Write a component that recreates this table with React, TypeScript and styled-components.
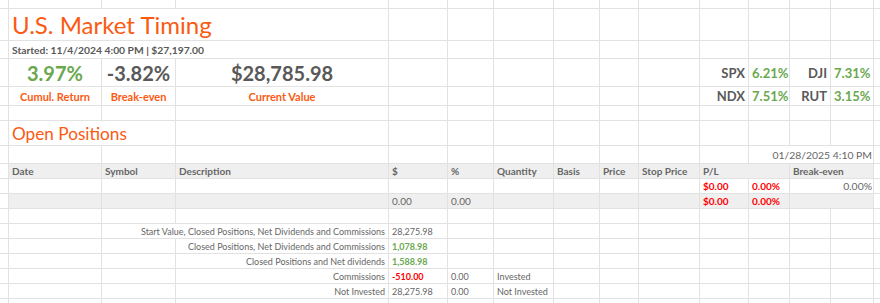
import React from "react";
import styled, { createGlobalStyle } from "styled-components";

const GlobalStyle = createGlobalStyle`
  html, body {
    margin: 0;
    padding: 0;
    background: #ffffff;
    overflow: hidden;
  }
  body {
    font-family: Lato, "Open Sans", sans-serif;
  }
`;

// column / row sizes of the sheet, borders sit on the last pixel of each track
const COLS = [9, 93, 74, 213, 59, 46, 60, 46, 39, 61, 49, 41, 41, 43, 30];
const ROWS = [9, 32, 18, 28, 19, 15, 25, 18, 15, 15, 15, 15, 15, 15, 15, 15, 15, 15];

const GRID = "#e2e2e2";
const ORANGE = "#fb5a12";
const GREEN = "#6aa84f";
const RED = "#ff0000";
const INK = "#595959";
const MUTED = "#666666";

const Sheet = styled.div`
  display: grid;
  grid-template-columns: ${COLS.map((c) => `${c}px`).join(" ")};
  grid-template-rows: ${ROWS.map((r) => `${r}px`).join(" ")};
  width: 880px;
  height: 303px;
  overflow: hidden;
`;

type Align = "left" | "center" | "right";

const Cell = styled.div<{
  $r: number;
  $c: number;
  $span: number;
  $shade?: boolean;
  $align?: Align;
}>`
  grid-row: ${({ $r }) => $r + 1};
  grid-column: ${({ $c, $span }) => `${$c + 1} / span ${$span}`};
  box-sizing: border-box;
  border-right: 1px solid ${GRID};
  border-bottom: 1px solid ${GRID};
  background: ${({ $shade }) => ($shade ? "#efefef" : "transparent")};
  display: flex;
  align-items: center;
  justify-content: ${({ $align }) =>
    $align === "center" ? "center" : $align === "right" ? "flex-end" : "flex-start"};
  padding: 0 3px;
  white-space: nowrap;
  font-size: 10px;
  color: ${MUTED};
`;

const Title = styled(Cell)`
  font-size: 24px;
  color: ${ORANGE};
`;

const Started = styled(Cell)`
  font-size: 10.3px;
  font-weight: 700;
  color: ${INK};
`;

const BigGain = styled(Cell).attrs({ $align: "center" as Align })`
  font-size: 20px;
  font-weight: 700;
  color: ${GREEN};
`;

const BigFigure = styled(Cell).attrs({ $align: "center" as Align })`
  font-size: 20px;
  font-weight: 700;
  color: ${INK};
`;

const FigureLabel = styled(Cell).attrs({ $align: "center" as Align })`
  font-size: 11px;
  font-weight: 700;
  color: ${ORANGE};
`;

const IndexName = styled(Cell).attrs({ $align: "right" as Align })`
  font-size: 13px;
  font-weight: 700;
  color: ${INK};
`;

const IndexValue = styled(Cell)`
  font-size: 13px;
  font-weight: 700;
  color: ${GREEN};
`;

const Section = styled(Cell)`
  font-size: 17.2px;
  color: ${ORANGE};
`;

const Stamp = styled(Cell).attrs({ $align: "right" as Align })`
  font-size: 10.4px;
  padding-right: 1px;
  color: ${MUTED};
`;

const Head = styled(Cell)`
  font-weight: 700;
  color: ${MUTED};
`;

const Data = styled(Cell)``;

const EdgeValue = styled(Cell).attrs({ $align: "right" as Align })`
  font-size: 10.4px;
  padding-right: 1px;
`;

const Loss = styled(Cell)`
  font-weight: 700;
  color: ${RED};
`;

// the summary block under the table uses a smaller type
const SumLabel = styled(Cell).attrs({ $align: "right" as Align })`
  font-size: 9px;
`;

const SumValue = styled(Cell)`
  font-size: 9px;
`;

const SumGain = styled(SumValue)`
  font-weight: 700;
  color: ${GREEN};
`;

const SumLoss = styled(SumValue)`
  font-weight: 700;
  color: ${RED};
`;

const Blank = styled(Cell)``;

type Entry = [number, number, number, React.ElementType, string];

const entries: Entry[] = [
  [1, 1, 3, Title, "U.S. Market Timing"],
  [2, 1, 3, Started, "Started: 11/4/2024 4:00 PM | $27,197.00"],

  [3, 1, 1, BigGain, "3.97%"],
  [3, 2, 1, BigFigure, "-3.82%"],
  [3, 3, 1, BigFigure, "$28,785.98"],
  [4, 1, 1, FigureLabel, "Cumul. Return"],
  [4, 2, 1, FigureLabel, "Break-even"],
  [4, 3, 1, FigureLabel, "Current Value"],

  [3, 10, 1, IndexName, "SPX"],
  [3, 11, 1, IndexValue, "6.21%"],
  [3, 12, 1, IndexName, "DJI"],
  [3, 13, 1, IndexValue, "7.31%"],
  [4, 10, 1, IndexName, "NDX"],
  [4, 11, 1, IndexValue, "7.51%"],
  [4, 12, 1, IndexName, "RUT"],
  [4, 13, 1, IndexValue, "3.15%"],

  [6, 1, 2, Section, "Open Positions"],
  [7, 11, 3, Stamp, "01/28/2025 4:10 PM"],

  [8, 1, 1, Head, "Date"],
  [8, 2, 1, Head, "Symbol"],
  [8, 3, 1, Head, "Description"],
  [8, 4, 1, Head, "$"],
  [8, 5, 1, Head, "%"],
  [8, 6, 1, Head, "Quantity"],
  [8, 7, 1, Head, "Basis"],
  [8, 8, 1, Head, "Price"],
  [8, 9, 1, Head, "Stop Price"],
  [8, 10, 2, Head, "P/L"],
  [8, 12, 2, Head, "Break-even"],

  [9, 10, 1, Loss, "$0.00"],
  [9, 11, 1, Loss, "0.00%"],
  [9, 12, 2, EdgeValue, "0.00%"],

  [10, 4, 1, Data, "0.00"],
  [10, 5, 1, Data, "0.00"],
  [10, 10, 1, Loss, "$0.00"],
  [10, 11, 1, Loss, "0.00%"],
  [10, 12, 2, Blank, ""],

  [12, 2, 2, SumLabel, "Start Value, Closed Positions, Net Dividends and Commissions"],
  [12, 4, 1, SumValue, "28,275.98"],
  [13, 3, 1, SumLabel, "Closed Positions, Net Dividends and Commissions"],
  [13, 4, 1, SumGain, "1,078.98"],
  [14, 3, 1, SumLabel, "Closed Positions and Net dividends"],
  [14, 4, 1, SumGain, "1,588.98"],
  [15, 3, 1, SumLabel, "Commissions"],
  [15, 4, 1, SumLoss, "-510.00"],
  [15, 5, 1, SumValue, "0.00"],
  [15, 6, 1, SumValue, "Invested"],
  [16, 3, 1, SumLabel, "Not Invested"],
  [16, 4, 1, SumValue, "28,275.98"],
  [16, 5, 1, SumValue, "0.00"],
  [16, 6, 1, SumValue, "Not Invested"],
];

const isShaded = (r: number, c: number) => (r === 8 || r === 10) && c >= 1 && c <= 13;

export default function App() {
  const taken = new Set<string>();
  entries.forEach(([r, c, span]) => {
    for (let i = 0; i < span; i++) taken.add(`${r}-${c + i}`);
  });

  const blanks: React.ReactNode[] = [];
  ROWS.forEach((_, r) => {
    COLS.forEach((__, c) => {
      if (!taken.has(`${r}-${c}`)) {
        blanks.push(
          <Blank key={`b-${r}-${c}`} $r={r} $c={c} $span={1} $shade={isShaded(r, c)} />
        );
      }
    });
  });

  return (
    <>
      <GlobalStyle />
      <Sheet>
        {blanks}
        {entries.map(([r, c, span, Comp, text]) => (
          <Comp key={`e-${r}-${c}`} $r={r} $c={c} $span={span} $shade={isShaded(r, c)}>
            {text}
          </Comp>
        ))}
      </Sheet>
    </>
  );
}
